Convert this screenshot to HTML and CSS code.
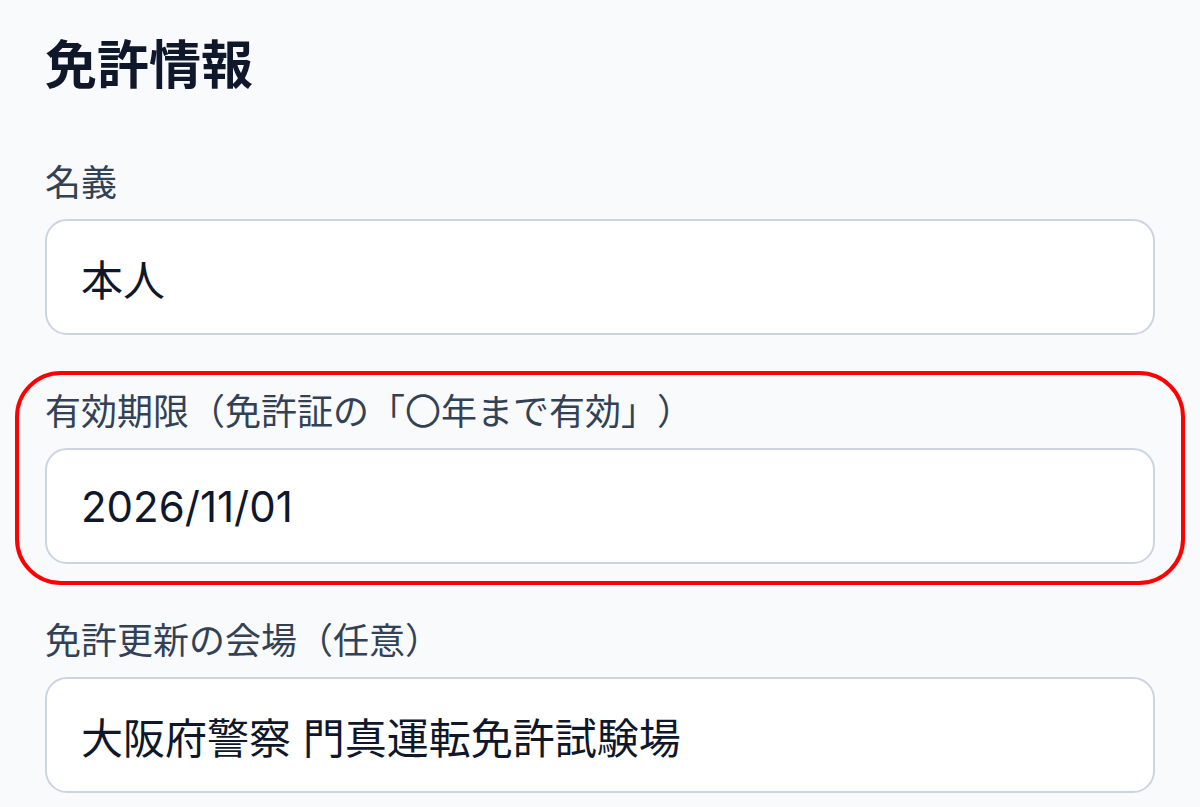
FILE: index.html
```html
<!DOCTYPE html>
<html lang="ja">
<head>
<meta charset="utf-8">
<title>免許情報</title>
<link rel="stylesheet" href="styles.css">
</head>
<body>
<main class="page">
  <h1 class="title">免許情報</h1>
  <div class="fields">
    <div class="field">
      <label class="label">名義</label>
      <div class="input">本人</div>
    </div>
    <div class="field field-highlight">
      <label class="label">有効期限（免許証の「〇年まで有効」）</label>
      <div class="input">2026/11/01</div>
      <div class="highlight"></div>
    </div>
    <div class="field">
      <label class="label">免許更新の会場（任意）</label>
      <div class="input">大阪府警察 門真運転免許試験場</div>
    </div>
  </div>
</main>
</body>
</html>
```

FILE: styles.css
```css
* { box-sizing: border-box; }
html, body {
  margin: 0;
  padding: 0;
  background: #f8fafc;
  height: 100%;
  overflow: hidden;
}
body {
  font-family: "Inter", "Noto Sans CJK JP", sans-serif;
  text-spacing-trim: space-all;
}
.page {
  padding: 31px 45px 0 45px;
}
.title {
  margin: 0 0 54px 0;
  font-size: 52px;
  line-height: 70px;
  font-weight: 700;
  color: #0f172a;
  letter-spacing: 0;
}
.fields {
  display: flex;
  flex-direction: column;
  gap: 49px;
}
.field {
  position: relative;
  display: flex;
  flex-direction: column;
  gap: 14px;
}
.label {
  display: block;
  font-family: "Noto Sans CJK JP", sans-serif;
  font-size: 36px;
  line-height: 50px;
  color: #334155;
  text-spacing-trim: space-all;
}
.input {
  height: 116px;
  background: #ffffff;
  border: 2px solid #cbd5e1;
  border-radius: 22px;
  padding: 0 34px;
  display: flex;
  align-items: center;
  font-size: 42px;
  color: #0f172a;
}
.highlight {
  position: absolute;
  left: -30px;
  right: -30px;
  top: -13px;
  bottom: -21px;
  border: 4px solid #ff0000;
  border-radius: 46px;
  pointer-events: none;
}
```
